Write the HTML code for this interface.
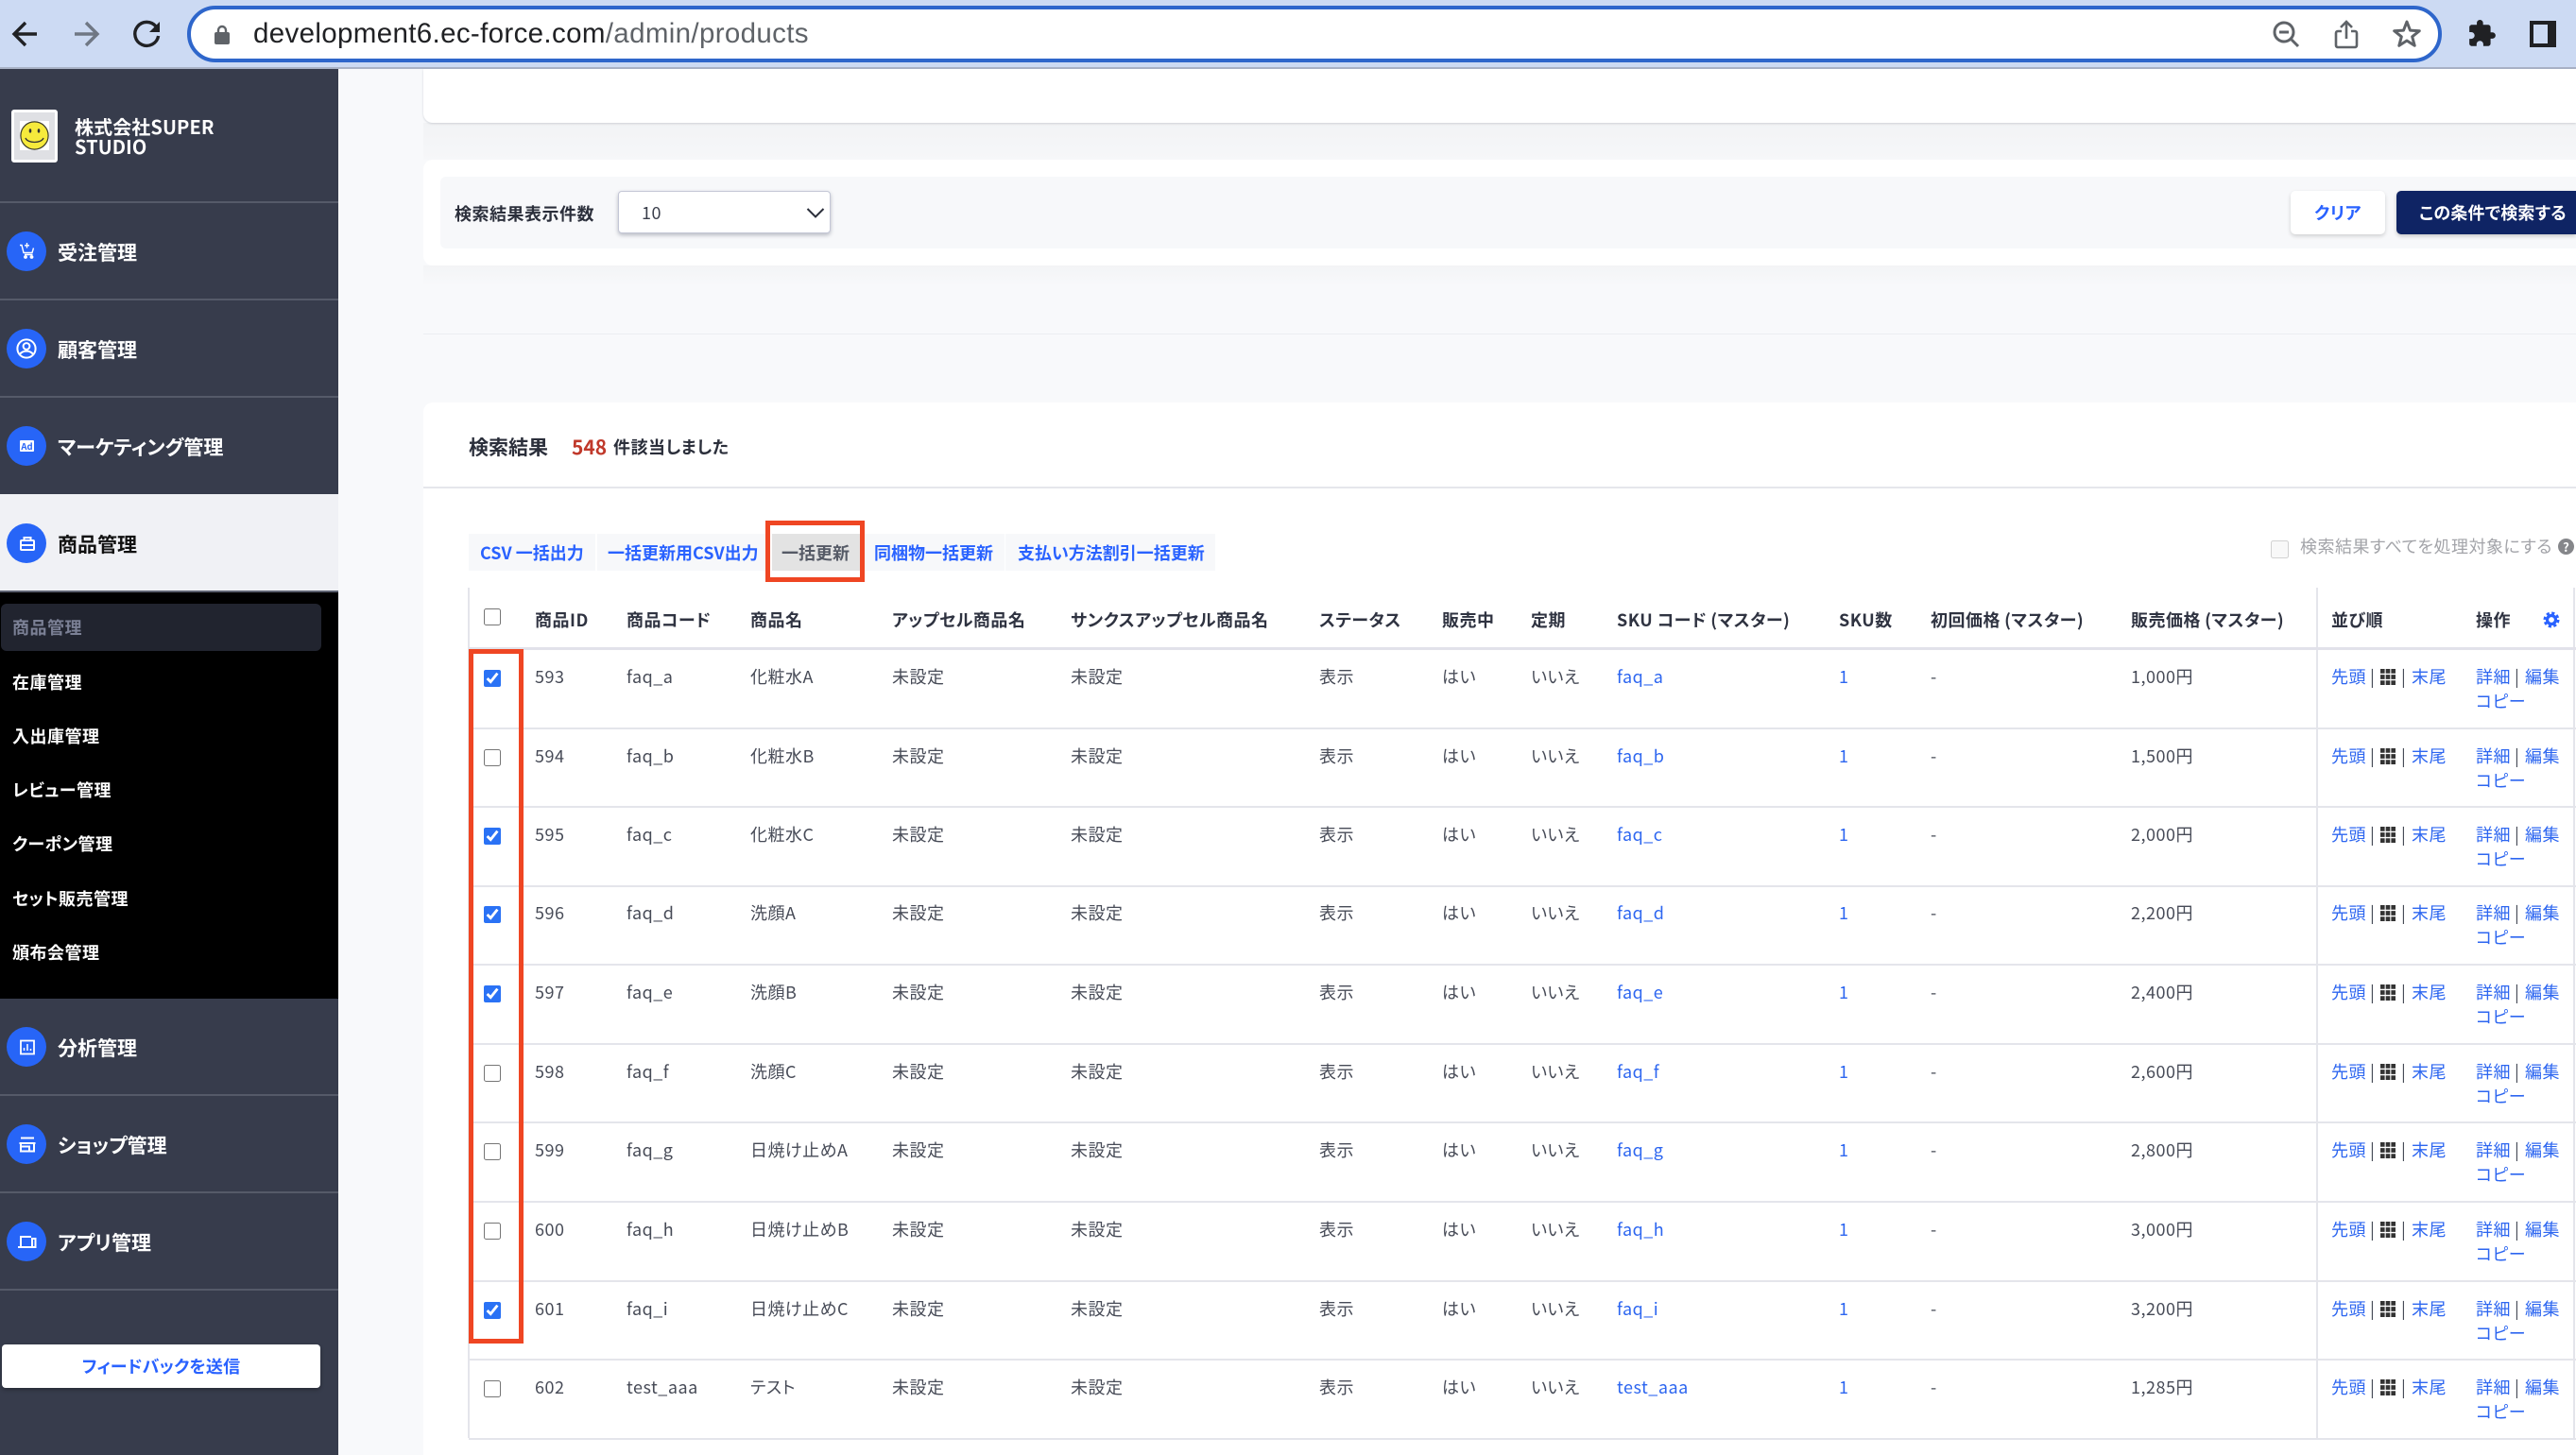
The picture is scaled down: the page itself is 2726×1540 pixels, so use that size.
<!DOCTYPE html>
<html lang="ja"><head><meta charset="utf-8"><title>products</title>
<style>
*{box-sizing:border-box}
html,body{margin:0;padding:0;width:2726px;height:1540px;overflow:hidden;background:#f8f9fb;font-family:"Noto Sans CJK JP","Liberation Sans",sans-serif;font-feature-settings:"palt";letter-spacing:.5px}
.a{position:absolute;white-space:nowrap}
#bar{position:absolute;left:0;top:0;width:2726px;height:73px;background:#ccdaf3;border-bottom:2px solid #a9b2c6}
#url{position:absolute;left:198px;top:6px;width:2386px;height:60px;border:4px solid #2e66cb;border-radius:30px;background:#fff}
#urlt{position:absolute;left:268px;top:16px;font:29.5px/40px "Liberation Sans",sans-serif;letter-spacing:.35px;color:#202124;white-space:nowrap}
#urlt i{font-style:normal;color:#5f6368}
#side{position:absolute;left:0;top:73px;width:358px;height:1467px;background:#373c4c}
.dv{position:absolute;left:0;width:358px;height:2px;background:#555a69}
.ci{position:absolute;left:7px;width:42px;height:42px;border-radius:50%;background:#2765f7}
.ci svg{position:absolute;left:0;top:0}
.nt{position:absolute;left:61px;font-size:21px;line-height:30px;font-weight:700;letter-spacing:0;color:#fff;white-space:nowrap}
.st{position:absolute;left:13px;font-size:18px;line-height:26px;font-weight:700;color:#fff;white-space:nowrap}
.card{position:absolute;left:448px;width:2278px;background:#fff}
.hd{position:absolute;top:643px;font-size:18px;line-height:26px;font-weight:700;color:#2f3341;white-space:nowrap}
.tab{position:absolute;top:565px;height:39px;background:#f7f8fa}
.tt{position:absolute;top:572px;font-size:18px;line-height:26px;font-weight:700;letter-spacing:0;color:#2962ff;white-space:nowrap}
.l{position:absolute;height:2px;background:#e4e5eb;left:496px;width:2230px}
.r{position:absolute;left:0;width:2726px;height:83px}
.r span{position:absolute;top:16px;line-height:26px;white-space:nowrap;font-size:18px;color:#474b57}
.r span.b,.r .b{color:#2d66f0}
.r input{position:absolute;left:512px;top:22px;width:18px;height:18px;margin:0;accent-color:#2a72f5}
.r span.cp{left:2620px;top:42px;color:#2d66f0}
.r svg{position:absolute;left:2519px;top:21px}
.c1{left:566px}.c2{left:663px}.c3{left:794px}.c4{left:944px}.c5{left:1133px}.c6{left:1396px}.c7{left:1526px}.c8{left:1620px}.c9{left:1711px}.c10{left:1946px}.c11{left:2043px}.c12{left:2255px}
.s1{left:2467px}.s2{left:2508px}.s3{left:2541px}.s4{left:2552px}.o1{left:2620px}.o2{left:2661px}.o3{left:2672px}
.red{position:absolute;border:5px solid #ef4623}
</style></head><body>

<div id="bar"></div>
<div id="url"></div>
<div id="urlt">development6.ec-force.com<i>/admin/products</i></div>
<svg class="a" style="left:0;top:0" width="2726" height="73" viewBox="0 0 2726 73" fill="none">
<path d="M39 36H15M27 24L15 36L27 48" stroke="#202124" stroke-width="3.4"/>
<path d="M79 36H103M91 24L103 36L91 48" stroke="#6f7784" stroke-width="3.4"/>
<path d="M165 28A12.5 12.5 0 1 0 167.6 38" stroke="#202124" stroke-width="3.4"/>
<path d="M169 23V34H158Z" fill="#202124"/>
<rect x="227" y="34" width="16" height="13" rx="2" fill="#5f6368"/>
<path d="M231 35V32a4 4 0 0 1 8 0v3" stroke="#5f6368" stroke-width="2.4"/>
<circle cx="2417" cy="34" r="10" stroke="#5f6368" stroke-width="3"/>
<path d="M2425 42L2432 49M2412 34H2422" stroke="#5f6368" stroke-width="3"/>
<path d="M2478 33h-4a2 2 0 0 0-2 2v13a2 2 0 0 0 2 2h18a2 2 0 0 0 2-2V35a2 2 0 0 0-2-2h-4" stroke="#5f6368" stroke-width="2.6"/>
<path d="M2483 41V24M2477 29l6-6 6 6" stroke="#5f6368" stroke-width="2.6"/>
<polygon points="2547,23 2550.5,32.15 2560.3,32.7 2552.7,38.85 2555.2,48.3 2547,43 2538.8,48.3 2541.3,38.85 2533.7,32.7 2543.5,32.15" stroke="#5f6368" stroke-width="3" stroke-linejoin="round"/>
<path transform="translate(2610.5 19.7) scale(1.32)" fill="#202124" d="M20.5 11H19V7c0-1.1-.9-2-2-2h-4V3.5C13 2.12 11.88 1 10.5 1S8 2.12 8 3.5V5H4c-1.1 0-1.99.9-1.99 2v3.8H3.5c1.49 0 2.7 1.21 2.7 2.7s-1.21 2.7-2.7 2.7H2V20c0 1.1.9 2 2 2h3.8v-1.5c0-1.49 1.21-2.7 2.7-2.7 1.49 0 2.7 1.21 2.7 2.7V22H17c1.1 0 2-.9 2-2v-4h1.5c1.38 0 2.5-1.12 2.5-2.5S21.88 11 20.5 11z"/>
<rect x="2677" y="22" width="28" height="28" fill="#202124"/>
<rect x="2681" y="26" width="15" height="20" fill="#ccdaf3"/>
</svg>

<!-- sidebar -->
<div id="side"></div>
<div class="a" style="left:12px;top:116px;width:49px;height:56px;background:#dfe0e4;border:3px solid #fff;border-radius:3px"></div>
<svg class="a" style="left:21px;top:128px" width="31" height="31" viewBox="0 0 31 31">
<rect width="31" height="31" fill="#fff"/>
<circle cx="15.5" cy="15.5" r="14.6" fill="#f6ea3c" stroke="#3a3a2a" stroke-width="1.2"/>
<ellipse cx="11" cy="10.5" rx="1.3" ry="2.2" fill="#333"/><ellipse cx="20" cy="10.5" rx="1.3" ry="2.2" fill="#333"/>
<path d="M6 18c2 6 17 6 19 0" fill="none" stroke="#333" stroke-width="1.3"/>
</svg>
<div class="a" style="left:79px;top:123px;font-size:20px;line-height:21px;font-weight:700;letter-spacing:.1px;color:#fff">株式会社SUPER<br>STUDIO</div>

<div class="dv" style="top:213px"></div>
<div class="ci" style="top:245px"><svg width="42" height="42" fill="none" stroke="#fff" stroke-width="1.4"><path d="M14 14.500h2l2 8h9l1.500-5M21.500 12v5.500M19 14.800h5M19 24.500h8.500"/><circle cx="20" cy="27" r="1.2" fill="#fff"/><circle cx="26.500" cy="27" r="1.2" fill="#fff"/></svg></div>
<div class="nt" style="top:252px">受注管理</div>
<div class="dv" style="top:316px"></div>
<div class="ci" style="top:348px"><svg width="42" height="42" fill="none" stroke="#fff" stroke-width="2"><circle cx="21" cy="21" r="9.6"/><circle cx="21" cy="18.5" r="3.4"/><path d="M14 27c3-4.5 11-4.500 14 0"/></svg></div>
<div class="nt" style="top:355px">顧客管理</div>
<div class="dv" style="top:419px"></div>
<div class="ci" style="top:451px;overflow:hidden"><div class="a" style="left:14px;top:15px;width:15px;height:12px;background:#fff;border-radius:1px;color:#2765f7;font-size:9.500px;line-height:12px;font-weight:700;letter-spacing:0;text-align:center">Ad</div></div>
<div class="nt" style="top:458px">マーケティング管理</div>
<div class="a" style="left:0;top:523px;width:358px;height:103px;background:#f0f1f5"></div>
<div class="a" style="left:0;top:625px;width:358px;height:2px;background:#5d6170"></div>
<div class="ci" style="top:554px"><svg width="42" height="42" fill="none" stroke="#fff" stroke-width="2"><rect x="15" y="18" width="14" height="10" rx="1"/><path d="M18.500 18v-3h7v3M15 23h14"/></svg></div>
<div class="nt" style="top:561px;color:#111">商品管理</div>
<div class="a" style="left:0;top:627px;width:358px;height:430px;background:#000"></div>
<div class="a" style="left:1px;top:639px;width:339px;height:50px;background:#21242f;border-radius:6px"></div>
<div class="st" style="top:651px;color:#7b8095">商品管理</div>
<div class="st" style="top:709px">在庫管理</div>
<div class="st" style="top:766px">入出庫管理</div>
<div class="st" style="top:823px">レビュー管理</div>
<div class="st" style="top:880px">クーポン管理</div>
<div class="st" style="top:938px">セット販売管理</div>
<div class="st" style="top:995px">頒布会管理</div>
<div class="ci" style="top:1087px"><svg width="42" height="42" fill="none" stroke="#fff" stroke-width="1.800"><rect x="15" y="14.500" width="14" height="14"/><path d="M18.500 25v-3M22 25v-7M25.500 25v-2" stroke-width="1.500"/></svg></div>
<div class="nt" style="top:1094px">分析管理</div>
<div class="dv" style="top:1158px"></div>
<div class="ci" style="top:1190px"><svg width="42" height="42" fill="none" stroke="#fff" stroke-width="2"><path d="M15 14.500h14M13.500 20h17M15 20v8.500h14V20M15 23.500h9v5"/></svg></div>
<div class="nt" style="top:1197px">ショップ管理</div>
<div class="dv" style="top:1261px"></div>
<div class="ci" style="top:1293px"><svg width="42" height="42" fill="none" stroke="#fff" stroke-width="2"><path d="M15 26V16h11M12 27h14"/><rect x="27" y="18" width="3.500" height="9"/></svg></div>
<div class="nt" style="top:1300px">アプリ管理</div>
<div class="dv" style="top:1364px"></div>
<div class="a" style="left:2px;top:1423px;width:337px;height:46px;background:#fff;border-radius:4px;box-shadow:0 2px 4px rgba(0,0,0,.3);text-align:center;font-size:18px;line-height:46px;font-weight:700;letter-spacing:.2px;color:#2962ff">フィードバックを送信</div>

<!-- background bands below cards -->
<div class="a" style="left:448px;top:130px;width:2278px;height:39px;background:linear-gradient(#f2f3f5,#f6f7f9)"></div>
<div class="a" style="left:448px;top:281px;width:2278px;height:22px;background:linear-gradient(#f3f4f6,#f8f9fb)"></div>

<!-- top cards -->
<div class="card" style="top:73px;height:57px;border-radius:0 0 0 10px;box-shadow:0 1px 2px rgba(60,70,90,.2)"></div>
<div class="card" style="top:169px;height:112px;border-radius:10px 0 0 10px"></div>
<div class="a" style="left:466px;top:187px;width:2260px;height:76px;background:#f7f8fa;border-radius:6px 0 0 6px"></div>
<div class="a" style="left:481px;top:213px;font-size:18px;line-height:26px;font-weight:700;color:#2b2f3b">検索結果表示件数</div>
<div class="a" style="left:654px;top:202px;width:225px;height:45px;background:#fff;border:1px solid #c4c7d6;border-radius:4px;box-shadow:0 2px 4px rgba(40,45,70,.3);padding-left:24px;font-size:18px;line-height:44px;color:#3a3e4b">10</div>
<svg class="a" style="left:853px;top:219px" width="20" height="12" fill="none"><path d="M1.500 2L10 10.500L18.500 2" stroke="#2b2f3b" stroke-width="2"/></svg>
<div class="a" style="left:2424px;top:202px;width:100px;height:46px;background:#fff;border-radius:5px;box-shadow:0 2px 4px rgba(0,0,0,.16);text-align:center;font-size:18px;line-height:46px;font-weight:700;color:#2962ff">クリア</div>
<div class="a" style="left:2536px;top:202px;width:190px;height:46px;background:#0f2464;border-radius:5px 0 0 5px;box-shadow:0 2px 4px rgba(0,0,0,.2);padding-left:24px;font-size:18px;line-height:46px;font-weight:700;letter-spacing:.2px;color:#fff">この条件で検索する</div>
<div class="a" style="left:448px;top:353px;width:2278px;height:1px;background:#eceef2"></div>

<!-- results card -->
<div class="card" style="top:426px;height:1114px;border-radius:10px 0 0 0"></div>
<div class="a" style="left:496px;top:458px;font-size:21px;line-height:30px;font-weight:700;letter-spacing:0;color:#2b2f3b">検索結果</div>
<div class="a" style="left:605px;top:458px;font-size:21px;line-height:30px;font-weight:700;letter-spacing:0;color:#c0392b">548</div>
<div class="a" style="left:649px;top:459px;font-size:18px;line-height:28px;font-weight:700;letter-spacing:.5px;color:#2b2f3b">件該当しました</div>
<div class="a" style="left:448px;top:515px;width:2278px;height:2px;background:#e5e6ec"></div>

<div class="tab" style="left:496px;width:134px"></div>
<div class="tab" style="left:632px;width:183px"></div>
<div class="tab" style="left:817px;width:94px;background:#e3e3e3"></div>
<div class="tab" style="left:913px;width:150px"></div>
<div class="tab" style="left:1064px;width:222px"></div>
<div class="tt" style="left:508px">CSV 一括出力</div>
<div class="tt" style="left:643px">一括更新用CSV出力</div>
<div class="tt" style="left:827px;color:#555a66">一括更新</div>
<div class="tt" style="left:925px">同梱物一括更新</div>
<div class="tt" style="left:1077px">支払い方法割引一括更新</div>

<input type="checkbox" disabled class="a" style="left:2403px;top:572px;width:19px;height:19px;margin:0">
<div class="a" style="left:2434px;top:565px;font-size:18px;line-height:26px;color:#a3a4a9">検索結果すべてを処理対象にする</div>
<div class="a" style="left:2707px;top:570px;width:17px;height:17px;border-radius:50%;background:#85868a;color:#fff;font-size:13px;line-height:17px;font-weight:700;letter-spacing:0;text-align:center">?</div>

<!-- table frame -->
<div class="a" style="left:495px;top:622px;width:2px;height:900px;background:#e4e5eb"></div>
<div class="a" style="left:2451px;top:622px;width:2px;height:900px;background:#e4e5eb"></div>
<div class="a" style="left:2723px;top:622px;width:2px;height:900px;background:#e4e5eb"></div>
<div class="a" style="left:496px;top:685px;width:2230px;height:3px;background:#e2e2ea"></div>
<div class="l" style="top:770px"></div><div class="l" style="top:853px"></div><div class="l" style="top:937px"></div><div class="l" style="top:1020px"></div><div class="l" style="top:1104px"></div><div class="l" style="top:1187px"></div><div class="l" style="top:1271px"></div><div class="l" style="top:1355px"></div><div class="l" style="top:1438px"></div><div class="l" style="top:1522px"></div>

<input type="checkbox" class="a" style="left:512px;top:644px;width:18px;height:18px;margin:0">
<div class="hd c1">商品ID</div><div class="hd c2">商品コード</div><div class="hd c3">商品名</div><div class="hd c4">アップセル商品名</div><div class="hd c5">サンクスアップセル商品名</div><div class="hd c6">ステータス</div><div class="hd c7">販売中</div><div class="hd c8">定期</div><div class="hd c9">SKU コード&thinsp;(マスター)</div><div class="hd c10">SKU数</div><div class="hd c11">初回価格&thinsp;(マスター)</div><div class="hd c12">販売価格&thinsp;(マスター)</div><div class="hd" style="left:2467px">並び順</div><div class="hd" style="left:2620px">操作</div>
<svg class="a" style="left:2691px;top:647px" width="18" height="18" fill="none" stroke="#2962ff"><circle cx="9" cy="9" r="4.500" stroke-width="3.200"/><circle cx="9" cy="9" r="7.200" stroke-width="2.600" stroke-dasharray="3.200 2.450"/></svg>

<div class="r" style="top:687px"><input type="checkbox" checked><span class="c1">593</span><span class="c2">faq_a</span><span class="c3">化粧水A</span><span class="c4">未設定</span><span class="c5">未設定</span><span class="c6">表示</span><span class="c7">はい</span><span class="c8">いいえ</span><span class="c9 b">faq_a</span><span class="c10 b">1</span><span class="c11">-</span><span class="c12">1,000円</span><span class="s1 b">先頭</span><span class="s2">|</span><svg width="16" height="17" fill="#333"><path d="M0 0h4.600v4.800H0zM5.700 0h4.600v4.800H5.700zM11.400 0H16v4.800h-4.600zM0 6.100h4.600v4.800H0zM5.700 6.100h4.600v4.800H5.700zM11.400 6.100H16v4.800h-4.600zM0 12.200h4.600V17H0zM5.700 12.200h4.600V17H5.700zM11.400 12.200H16V17h-4.600z"/></svg><span class="s3">|</span><span class="s4 b">末尾</span><span class="o1 b">詳細</span><span class="o2">|</span><span class="o3 b">編集</span><span class="cp">コピー</span></div>
<div class="r" style="top:771px"><input type="checkbox"><span class="c1">594</span><span class="c2">faq_b</span><span class="c3">化粧水B</span><span class="c4">未設定</span><span class="c5">未設定</span><span class="c6">表示</span><span class="c7">はい</span><span class="c8">いいえ</span><span class="c9 b">faq_b</span><span class="c10 b">1</span><span class="c11">-</span><span class="c12">1,500円</span><span class="s1 b">先頭</span><span class="s2">|</span><svg width="16" height="17" fill="#333"><path d="M0 0h4.600v4.800H0zM5.700 0h4.600v4.800H5.700zM11.400 0H16v4.800h-4.600zM0 6.100h4.600v4.800H0zM5.700 6.100h4.600v4.800H5.700zM11.400 6.100H16v4.800h-4.600zM0 12.200h4.600V17H0zM5.700 12.200h4.600V17H5.700zM11.400 12.200H16V17h-4.600z"/></svg><span class="s3">|</span><span class="s4 b">末尾</span><span class="o1 b">詳細</span><span class="o2">|</span><span class="o3 b">編集</span><span class="cp">コピー</span></div>
<div class="r" style="top:854px"><input type="checkbox" checked><span class="c1">595</span><span class="c2">faq_c</span><span class="c3">化粧水C</span><span class="c4">未設定</span><span class="c5">未設定</span><span class="c6">表示</span><span class="c7">はい</span><span class="c8">いいえ</span><span class="c9 b">faq_c</span><span class="c10 b">1</span><span class="c11">-</span><span class="c12">2,000円</span><span class="s1 b">先頭</span><span class="s2">|</span><svg width="16" height="17" fill="#333"><path d="M0 0h4.600v4.800H0zM5.700 0h4.600v4.800H5.700zM11.400 0H16v4.800h-4.600zM0 6.100h4.600v4.800H0zM5.700 6.100h4.600v4.800H5.700zM11.400 6.100H16v4.800h-4.600zM0 12.200h4.600V17H0zM5.700 12.200h4.600V17H5.700zM11.400 12.200H16V17h-4.600z"/></svg><span class="s3">|</span><span class="s4 b">末尾</span><span class="o1 b">詳細</span><span class="o2">|</span><span class="o3 b">編集</span><span class="cp">コピー</span></div>
<div class="r" style="top:937px"><input type="checkbox" checked><span class="c1">596</span><span class="c2">faq_d</span><span class="c3">洗顔A</span><span class="c4">未設定</span><span class="c5">未設定</span><span class="c6">表示</span><span class="c7">はい</span><span class="c8">いいえ</span><span class="c9 b">faq_d</span><span class="c10 b">1</span><span class="c11">-</span><span class="c12">2,200円</span><span class="s1 b">先頭</span><span class="s2">|</span><svg width="16" height="17" fill="#333"><path d="M0 0h4.600v4.800H0zM5.700 0h4.600v4.800H5.700zM11.400 0H16v4.800h-4.600zM0 6.100h4.600v4.800H0zM5.700 6.100h4.600v4.800H5.700zM11.400 6.100H16v4.800h-4.600zM0 12.200h4.600V17H0zM5.700 12.200h4.600V17H5.700zM11.400 12.200H16V17h-4.600z"/></svg><span class="s3">|</span><span class="s4 b">末尾</span><span class="o1 b">詳細</span><span class="o2">|</span><span class="o3 b">編集</span><span class="cp">コピー</span></div>
<div class="r" style="top:1021px"><input type="checkbox" checked><span class="c1">597</span><span class="c2">faq_e</span><span class="c3">洗顔B</span><span class="c4">未設定</span><span class="c5">未設定</span><span class="c6">表示</span><span class="c7">はい</span><span class="c8">いいえ</span><span class="c9 b">faq_e</span><span class="c10 b">1</span><span class="c11">-</span><span class="c12">2,400円</span><span class="s1 b">先頭</span><span class="s2">|</span><svg width="16" height="17" fill="#333"><path d="M0 0h4.600v4.800H0zM5.700 0h4.600v4.800H5.700zM11.400 0H16v4.800h-4.600zM0 6.100h4.600v4.800H0zM5.700 6.100h4.600v4.800H5.700zM11.400 6.100H16v4.800h-4.600zM0 12.200h4.600V17H0zM5.700 12.200h4.600V17H5.700zM11.400 12.200H16V17h-4.600z"/></svg><span class="s3">|</span><span class="s4 b">末尾</span><span class="o1 b">詳細</span><span class="o2">|</span><span class="o3 b">編集</span><span class="cp">コピー</span></div>
<div class="r" style="top:1105px"><input type="checkbox"><span class="c1">598</span><span class="c2">faq_f</span><span class="c3">洗顔C</span><span class="c4">未設定</span><span class="c5">未設定</span><span class="c6">表示</span><span class="c7">はい</span><span class="c8">いいえ</span><span class="c9 b">faq_f</span><span class="c10 b">1</span><span class="c11">-</span><span class="c12">2,600円</span><span class="s1 b">先頭</span><span class="s2">|</span><svg width="16" height="17" fill="#333"><path d="M0 0h4.600v4.800H0zM5.700 0h4.600v4.800H5.700zM11.400 0H16v4.800h-4.600zM0 6.100h4.600v4.800H0zM5.700 6.100h4.600v4.800H5.700zM11.400 6.100H16v4.800h-4.600zM0 12.200h4.600V17H0zM5.700 12.200h4.600V17H5.700zM11.400 12.200H16V17h-4.600z"/></svg><span class="s3">|</span><span class="s4 b">末尾</span><span class="o1 b">詳細</span><span class="o2">|</span><span class="o3 b">編集</span><span class="cp">コピー</span></div>
<div class="r" style="top:1188px"><input type="checkbox"><span class="c1">599</span><span class="c2">faq_g</span><span class="c3">日焼け止めA</span><span class="c4">未設定</span><span class="c5">未設定</span><span class="c6">表示</span><span class="c7">はい</span><span class="c8">いいえ</span><span class="c9 b">faq_g</span><span class="c10 b">1</span><span class="c11">-</span><span class="c12">2,800円</span><span class="s1 b">先頭</span><span class="s2">|</span><svg width="16" height="17" fill="#333"><path d="M0 0h4.600v4.800H0zM5.700 0h4.600v4.800H5.700zM11.400 0H16v4.800h-4.600zM0 6.100h4.600v4.800H0zM5.700 6.100h4.600v4.800H5.700zM11.400 6.100H16v4.800h-4.600zM0 12.200h4.600V17H0zM5.700 12.200h4.600V17H5.700zM11.400 12.200H16V17h-4.600z"/></svg><span class="s3">|</span><span class="s4 b">末尾</span><span class="o1 b">詳細</span><span class="o2">|</span><span class="o3 b">編集</span><span class="cp">コピー</span></div>
<div class="r" style="top:1272px"><input type="checkbox"><span class="c1">600</span><span class="c2">faq_h</span><span class="c3">日焼け止めB</span><span class="c4">未設定</span><span class="c5">未設定</span><span class="c6">表示</span><span class="c7">はい</span><span class="c8">いいえ</span><span class="c9 b">faq_h</span><span class="c10 b">1</span><span class="c11">-</span><span class="c12">3,000円</span><span class="s1 b">先頭</span><span class="s2">|</span><svg width="16" height="17" fill="#333"><path d="M0 0h4.600v4.800H0zM5.700 0h4.600v4.800H5.700zM11.400 0H16v4.800h-4.600zM0 6.100h4.600v4.800H0zM5.700 6.100h4.600v4.800H5.700zM11.400 6.100H16v4.800h-4.600zM0 12.200h4.600V17H0zM5.700 12.200h4.600V17H5.700zM11.400 12.200H16V17h-4.600z"/></svg><span class="s3">|</span><span class="s4 b">末尾</span><span class="o1 b">詳細</span><span class="o2">|</span><span class="o3 b">編集</span><span class="cp">コピー</span></div>
<div class="r" style="top:1356px"><input type="checkbox" checked><span class="c1">601</span><span class="c2">faq_i</span><span class="c3">日焼け止めC</span><span class="c4">未設定</span><span class="c5">未設定</span><span class="c6">表示</span><span class="c7">はい</span><span class="c8">いいえ</span><span class="c9 b">faq_i</span><span class="c10 b">1</span><span class="c11">-</span><span class="c12">3,200円</span><span class="s1 b">先頭</span><span class="s2">|</span><svg width="16" height="17" fill="#333"><path d="M0 0h4.600v4.800H0zM5.700 0h4.600v4.800H5.700zM11.400 0H16v4.800h-4.600zM0 6.100h4.600v4.800H0zM5.700 6.100h4.600v4.800H5.700zM11.400 6.100H16v4.800h-4.600zM0 12.200h4.600V17H0zM5.700 12.200h4.600V17H5.700zM11.400 12.200H16V17h-4.600z"/></svg><span class="s3">|</span><span class="s4 b">末尾</span><span class="o1 b">詳細</span><span class="o2">|</span><span class="o3 b">編集</span><span class="cp">コピー</span></div>
<div class="r" style="top:1439px"><input type="checkbox"><span class="c1">602</span><span class="c2">test_aaa</span><span class="c3">テスト</span><span class="c4">未設定</span><span class="c5">未設定</span><span class="c6">表示</span><span class="c7">はい</span><span class="c8">いいえ</span><span class="c9 b">test_aaa</span><span class="c10 b">1</span><span class="c11">-</span><span class="c12">1,285円</span><span class="s1 b">先頭</span><span class="s2">|</span><svg width="16" height="17" fill="#333"><path d="M0 0h4.600v4.800H0zM5.700 0h4.600v4.800H5.700zM11.400 0H16v4.800h-4.600zM0 6.100h4.600v4.800H0zM5.700 6.100h4.600v4.800H5.700zM11.400 6.100H16v4.800h-4.600zM0 12.200h4.600V17H0zM5.700 12.200h4.600V17H5.700zM11.400 12.200H16V17h-4.600z"/></svg><span class="s3">|</span><span class="s4 b">末尾</span><span class="o1 b">詳細</span><span class="o2">|</span><span class="o3 b">編集</span><span class="cp">コピー</span></div>

<!-- red annotations -->
<div class="red" style="left:810px;top:551px;width:105px;height:65px"></div>
<div class="red" style="left:496px;top:687px;width:58px;height:735px"></div>
</body></html>
